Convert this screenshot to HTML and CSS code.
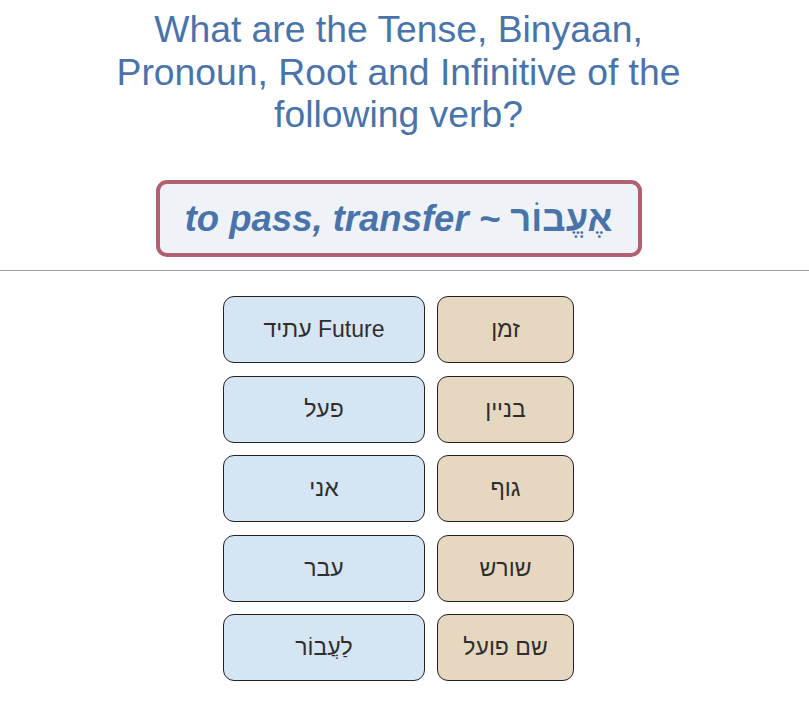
FILE: index.html
```html
<!DOCTYPE html>
<html lang="en">
<head>
<meta charset="utf-8">
<link rel="stylesheet" href="styles.css">
</head>
<body>
<main class="page">
  <header class="head">
    <h1 class="question">What are the Tense, Binyaan, Pronoun, Root and Infinitive of the following verb?</h1>
    <div class="verb-box">to pass, transfer ~&nbsp;<span class="heb">אֶעֱבוֹר</span></div>
  </header>
  <hr class="divider">
  <section class="grid">
    <div class="card answer">עתיד Future</div>
    <div class="card label">זמן</div>
    <div class="card answer">פעל</div>
    <div class="card label">בניין</div>
    <div class="card answer">אני</div>
    <div class="card label">גוף</div>
    <div class="card answer">עבר</div>
    <div class="card label">שורש</div>
    <div class="card answer">לַעֲבוֹר</div>
    <div class="card label">שם פועל</div>
  </section>
</main>
</body>
</html>
```
FILE: styles.css
```css
* { box-sizing: border-box; }
html, body { margin: 0; padding: 0; background: #fff; }
body {
  font-family: "Liberation Sans", Arial, "Noto Sans", sans-serif;
}
.page {
  width: 809px;
}
.head {
  display: flex;
  flex-direction: column;
  align-items: center;
  padding-right: 12px;
}
.question {
  margin: 8px 0 0;
  width: 620px;
  text-align: center;
  font-weight: normal;
  font-size: 37.3px;
  line-height: 42.5px;
  color: #4a73aa;
}
.verb-box {
  margin-top: 44.5px;
  width: 486px;
  height: 77px;
  display: flex;
  align-items: center;
  justify-content: center;
  border: 4px solid #b06070;
  border-radius: 11px;
  background: #eff3f8;
  color: #4a73aa;
  font-size: 36.5px;
  font-weight: bold;
  font-style: italic;
}
.heb {
  font-style: normal;
}
.divider {
  margin: 13px 0 0;
  border: 0;
  border-top: 1px solid #a0a0a0;
  height: 0;
}
.grid {
  margin: 25px 0 0 223px;
  display: grid;
  grid-template-columns: 202px 137px;
  grid-auto-rows: 67px;
  column-gap: 12px;
  row-gap: 12.5px;
}
.card {
  display: flex;
  align-items: center;
  justify-content: center;
  border: 1px solid #222;
  border-radius: 11px;
  font-size: 23px;
  color: #2e2e2e;
}
.answer { background: #d6e5f3; }
.label { background: #e6d7c1; }
```
